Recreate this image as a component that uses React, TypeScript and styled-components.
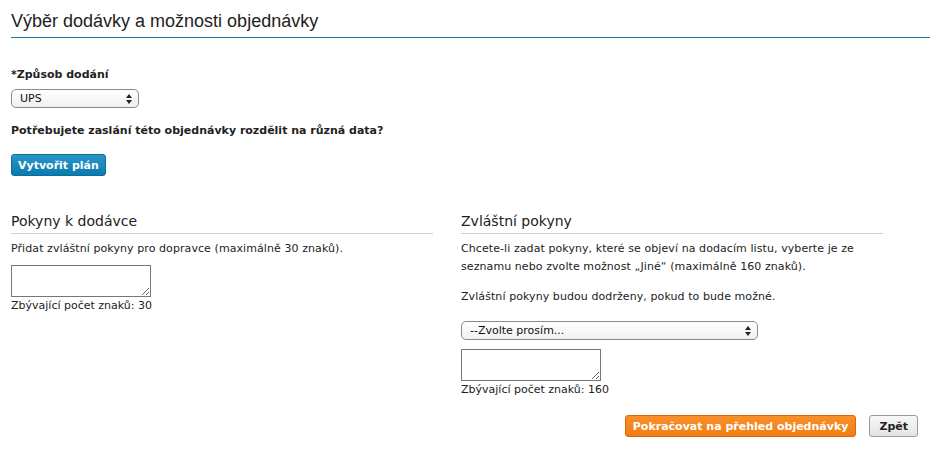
import React from "react";
import styled, { createGlobalStyle } from "styled-components";

const Global = createGlobalStyle`
  html, body { margin: 0; padding: 0; background: #fff; }
  body { font-family: "DejaVu Sans", Verdana, sans-serif; font-size: 11px; color: #222; }
`;

const Page = styled.div`
  width: 937px;
  padding: 0 7px 0 11px;
  box-sizing: border-box;
`;

const Title = styled.h1`
  margin: 0;
  padding-top: 10px;
  height: 27px;
  font-family: "Liberation Sans", Arial, sans-serif;
  font-weight: normal;
  font-size: 18px;
  line-height: 22px;
  color: #222;
  border-bottom: 1px solid #1f7a9c;
`;

const FieldLabel = styled.div`
  margin-top: 30px;
  font-weight: bold;
  line-height: 14px;
`;

const Select = styled.div<{ $w: number; $mt: number }>`
  width: ${(p) => p.$w}px;
  height: 19px;
  margin-top: ${(p) => p.$mt}px;
  box-sizing: border-box;
  border: 1px solid #8a8a8a;
  border-radius: 5px;
  background: linear-gradient(#ffffff, #f0f0f0);
  display: flex;
  align-items: center;
  justify-content: space-between;
  padding: 0 6px 0 8px;
  font-size: 11px;
  color: #111;
`;

const Arrows = styled.svg`
  width: 6px;
  height: 10px;
`;

const Question = styled.div`
  margin-top: 16px;
  font-weight: bold;
  line-height: 14px;
`;

const BlueButton = styled.button`
  margin-top: 16px;
  height: 22px;
  padding: 0 6px;
  border: 1px solid #0d6e99;
  border-radius: 3px;
  background: linear-gradient(#2a96c8, #0a7bb0);
  color: #fff;
  font-family: "DejaVu Sans", Verdana, sans-serif;
  font-weight: bold;
  font-size: 11px;
  display: block;
`;

const Columns = styled.div`
  display: grid;
  grid-template-columns: 422px 422px;
  column-gap: 28px;
  margin-top: 36px;
`;

const Column = styled.div`
  display: flex;
  flex-direction: column;
  align-items: flex-start;
`;

const SectionTitle = styled.h2`
  margin: 0;
  align-self: stretch;
  font-size: 14px;
  font-weight: normal;
  line-height: 18px;
  padding-bottom: 3px;
  border-bottom: 1px solid #cfcfcf;
  color: #222;
`;

const Para = styled.p<{ $mt?: number }>`
  margin: ${(p) => p.$mt ?? 6}px 0 0;
  line-height: 18px;
  letter-spacing: 0.08px;
`;

const TextArea = styled.textarea<{ $mt: number }>`
  margin-top: ${(p) => p.$mt}px;
  width: 140px;
  height: 32px;
  box-sizing: border-box;
  border: 1px solid #777;
  resize: both;
  padding: 2px;
  font-family: inherit;
`;

const Counter = styled.div`
  line-height: 14px;
  margin-top: 2px;
`;

const Actions = styled.div`
  display: flex;
  justify-content: flex-end;
  gap: 13px;
  margin-top: 18px;
  padding-right: 12px;
`;

const OrangeButton = styled.button`
  height: 22px;
  padding: 0 7px;
  border: 1px solid #d46a10;
  border-radius: 3px;
  background: linear-gradient(#f8902a, #f27d12);
  color: #fff;
  font-family: "DejaVu Sans", Verdana, sans-serif;
  font-weight: bold;
  font-size: 11px;
`;

const GrayButton = styled.button`
  height: 22px;
  padding: 0 9px;
  border: 1px solid #9a9a9a;
  border-radius: 3px;
  background: linear-gradient(#f8f8f8, #e4e4e4);
  color: #222;
  font-family: "DejaVu Sans", Verdana, sans-serif;
  font-weight: bold;
  font-size: 11px;
`;

const SelectArrows = () => (
  <Arrows viewBox="0 0 6 10">
    <path d="M3 0 L6 4 L0 4 Z M0 6 L6 6 L3 10 Z" fill="#222" />
  </Arrows>
);

export default function App() {
  return (
    <>
      <Global />
      <Page>
        <Title>Výběr dodávky a možnosti objednávky</Title>
        <FieldLabel>*Způsob dodání</FieldLabel>
        <Select $w={128} $mt={7}>
          <span>UPS</span>
          <SelectArrows />
        </Select>
        <Question>Potřebujete zaslání této objednávky rozdělit na různá data?</Question>
        <BlueButton>Vytvořit plán</BlueButton>
        <Columns>
          <Column>
            <SectionTitle>Pokyny k dodávce</SectionTitle>
            <Para>Přidat zvláštní pokyny pro dopravce (maximálně 30 znaků).</Para>
            <TextArea $mt={7} />
            <Counter>Zbývající počet znaků: 30</Counter>
          </Column>
          <Column>
            <SectionTitle>Zvláštní pokyny</SectionTitle>
            <Para>
              Chcete-li zadat pokyny, které se objeví na dodacím listu, vyberte je ze seznamu nebo
              zvolte možnost „Jiné“ (maximálně 160 znaků).
            </Para>
            <Para $mt={12}>Zvláštní pokyny budou dodrženy, pokud to bude možné.</Para>
            <Select $w={297} $mt={15}>
              <span>--Zvolte prosím...</span>
              <SelectArrows />
            </Select>
            <TextArea $mt={9} />
            <Counter>Zbývající počet znaků: 160</Counter>
          </Column>
        </Columns>
        <Actions>
          <OrangeButton>Pokračovat na přehled objednávky</OrangeButton>
          <GrayButton>Zpět</GrayButton>
        </Actions>
      </Page>
    </>
  );
}
